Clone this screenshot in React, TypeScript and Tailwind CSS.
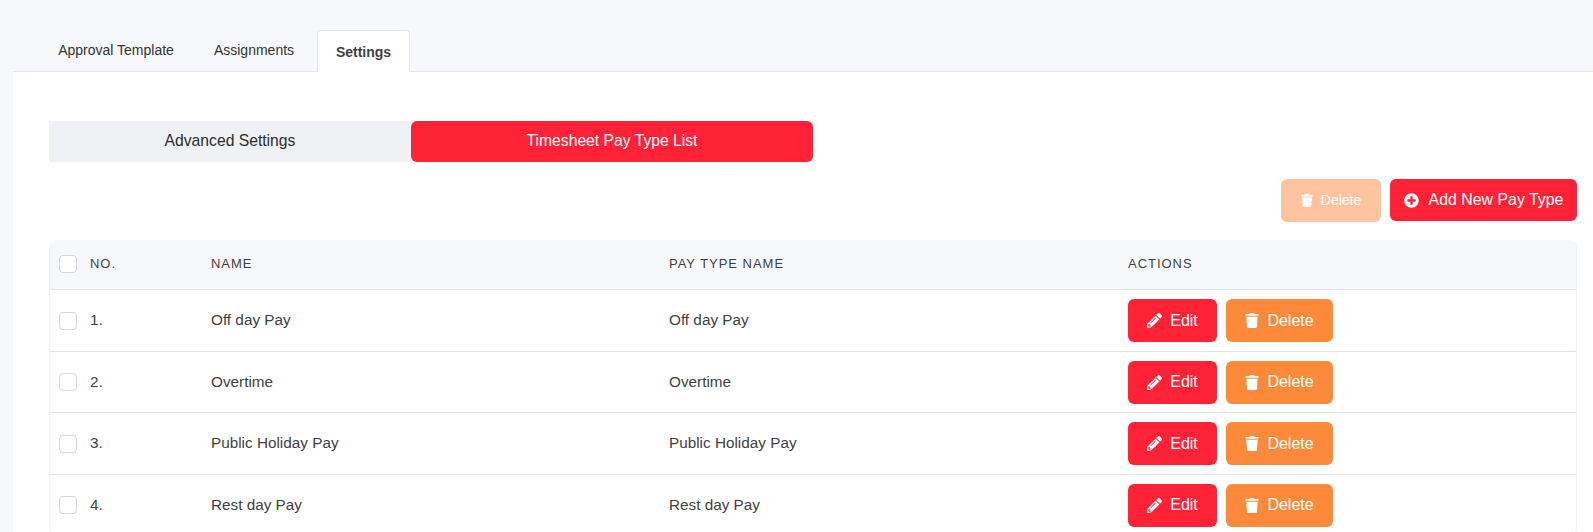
import React from 'react';
import { FaPencilAlt, FaPlusCircle, FaTrash } from 'react-icons/fa';

const payTypes = [
  { no: '1.', name: 'Off day Pay', rowClass: 'h-[62px]' },
  { no: '2.', name: 'Overtime', rowClass: 'h-[61px]' },
  { no: '3.', name: 'Public Holiday Pay', rowClass: 'h-[62px]' },
  { no: '4.', name: 'Rest day Pay', rowClass: 'h-[61px]' },
];

const Checkbox: React.FC = () => (
  <span className="block w-[18px] h-[18px] shrink-0 rounded-[4px] border border-[#d5d6de] bg-white" />
);

const App: React.FC = () => {
  return (
    <div className="h-screen overflow-hidden bg-[#f7f8fc] pl-[13px] pt-[30px] font-['Liberation_Sans',Arial,sans-serif] text-[#333]">
      {/* Tabs */}
      <div className="flex h-[42px] items-stretch border-b border-[#e4e5ec] pl-[45px] text-[14px]">
        <div className="flex w-[116px] items-center justify-center whitespace-nowrap">Approval Template</div>
        <div className="ml-[40px] flex w-[80px] items-center justify-center whitespace-nowrap">Assignments</div>
        <div className="-mb-[1px] ml-[23px] flex w-[93px] items-center justify-center rounded-t-[4px] border border-b-0 border-[#e4e5ec] bg-white pt-[1px] font-bold text-[#3f3f46]">
          Settings
        </div>
      </div>

      <div className="h-full bg-white pl-[36px] pr-[16px] pt-[49px]">
        {/* Sub tabs */}
        <div className="flex h-[41px] w-[764px] text-[15.7px]">
          <div className="flex w-[362px] items-center justify-center bg-[#f0f1f5] pb-[1px] text-[#2b2b2b]">Advanced Settings</div>
          <div className="flex w-[402px] items-center justify-center rounded-[6px] bg-[#fd2235] pb-[1px] text-white">
            Timesheet Pay Type List
          </div>
        </div>

        {/* Toolbar */}
        <div className="mt-[17px] flex justify-end gap-[9px]">
          <button className="flex h-[43px] w-[100px] items-center justify-center gap-[8px] rounded-[6px] bg-[#fdc49f] text-[14px] text-white">
            <FaTrash className="h-[13px] w-[12px]" />
            Delete
          </button>
          <button className="flex h-[42px] w-[187px] items-center justify-center gap-[10px] rounded-[6px] bg-[#fd2235] text-[15.9px] text-white">
            <FaPlusCircle className="h-[15px] w-[15px]" />
            Add New Pay Type
          </button>
        </div>

        {/* Table */}
        <div className="mt-[18px] rounded-[8px] border-l border-r border-[#f0f1f5] bg-white text-[15.3px] text-[#3f3f46]">
          <div className="grid h-[50px] grid-cols-[161px_458px_459px_1fr] items-center rounded-t-[8px] border-b border-[#e2e3ea] bg-[#f7f8fa] pb-[1px] text-[13px] tracking-[0.075em]">
            <div className="flex items-center gap-[13px] pl-[9px]">
              <Checkbox />
              <span>NO.</span>
            </div>
            <div>NAME</div>
            <div>PAY TYPE NAME</div>
            <div>ACTIONS</div>
          </div>
          {payTypes.map((row) => (
            <div
              key={row.no}
              className={`grid grid-cols-[161px_458px_459px_1fr] items-center border-b border-[#e2e3ea] ${row.rowClass}`}
            >
              <div className="flex items-center gap-[13px] pl-[9px]">
                <Checkbox />
                <span>{row.no}</span>
              </div>
              <div>{row.name}</div>
              <div>{row.name}</div>
              <div className="flex gap-[9px] text-[16px]">
                <button className="flex h-[43px] w-[89px] items-center justify-center gap-[8px] rounded-[6px] bg-[#fd2235] text-white">
                  <FaPencilAlt className="h-[15px] w-[15px]" />
                  Edit
                </button>
                <button className="flex h-[43px] w-[107px] items-center justify-center gap-[8px] rounded-[6px] bg-[#fd8a3b] text-white">
                  <FaTrash className="h-[15px] w-[14px]" />
                  Delete
                </button>
              </div>
            </div>
          ))}
        </div>
      </div>
    </div>
  );
};

export default App;
